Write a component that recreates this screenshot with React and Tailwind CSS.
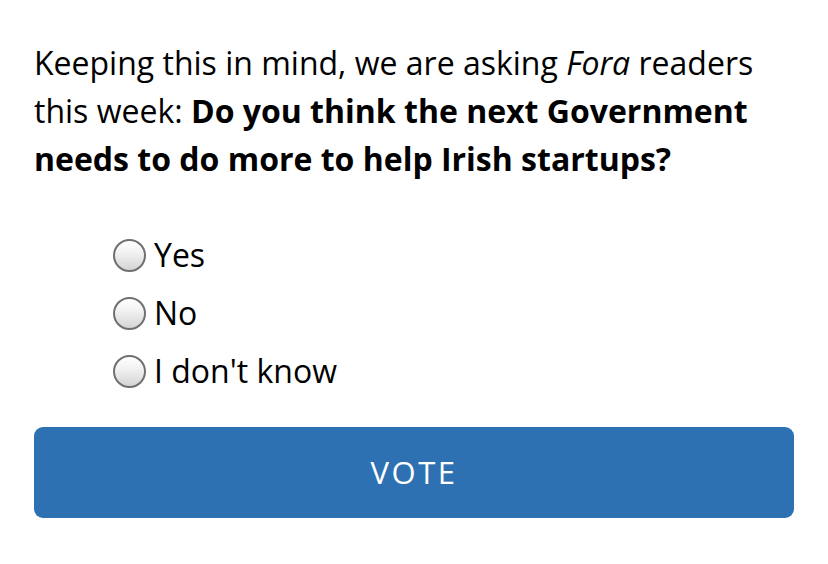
import React, { useState } from 'react'

const options = ['Yes', 'No', "I don't know"]

function Radio({ checked }) {
  return (
    <span className="w-[33px] h-[33px] rounded-full border-2 border-[#707070] bg-[linear-gradient(to_bottom,#ffffff_0%,#f2f2f2_40%,#d4d4d4_100%)] flex items-center justify-center shrink-0">
      {checked && <span className="w-[12px] h-[12px] rounded-full bg-[#333]" />}
    </span>
  )
}

export default function App() {
  const [choice, setChoice] = useState(null)

  return (
    <div className="w-[828px] h-[564px] bg-white px-[34px] pt-[39px] font-['Open_Sans',sans-serif] text-black">
      <p className="text-[32px] leading-[48px]">
        Keeping this in mind, we are asking <em>Fora</em> readers this week:{' '}
        <strong className="font-bold">Do you think the next Government needs to do more to help Irish startups?</strong>
      </p>

      <div className="mt-[48px] pl-[79px] flex flex-col gap-[10px]">
        {options.map((opt, i) => (
          <label key={opt} className="flex items-center gap-[8px] h-[48px] text-[32px] cursor-pointer" onClick={() => setChoice(i)}>
            <Radio checked={choice === i} />
            <span>{opt}</span>
          </label>
        ))}
      </div>

      <button className="mt-[32px] w-[760px] h-[91px] rounded-[9px] bg-[#2e71b3] text-white text-[31px] tracking-[2.5px] flex items-center justify-center">
        VOTE
      </button>
    </div>
  )
}
